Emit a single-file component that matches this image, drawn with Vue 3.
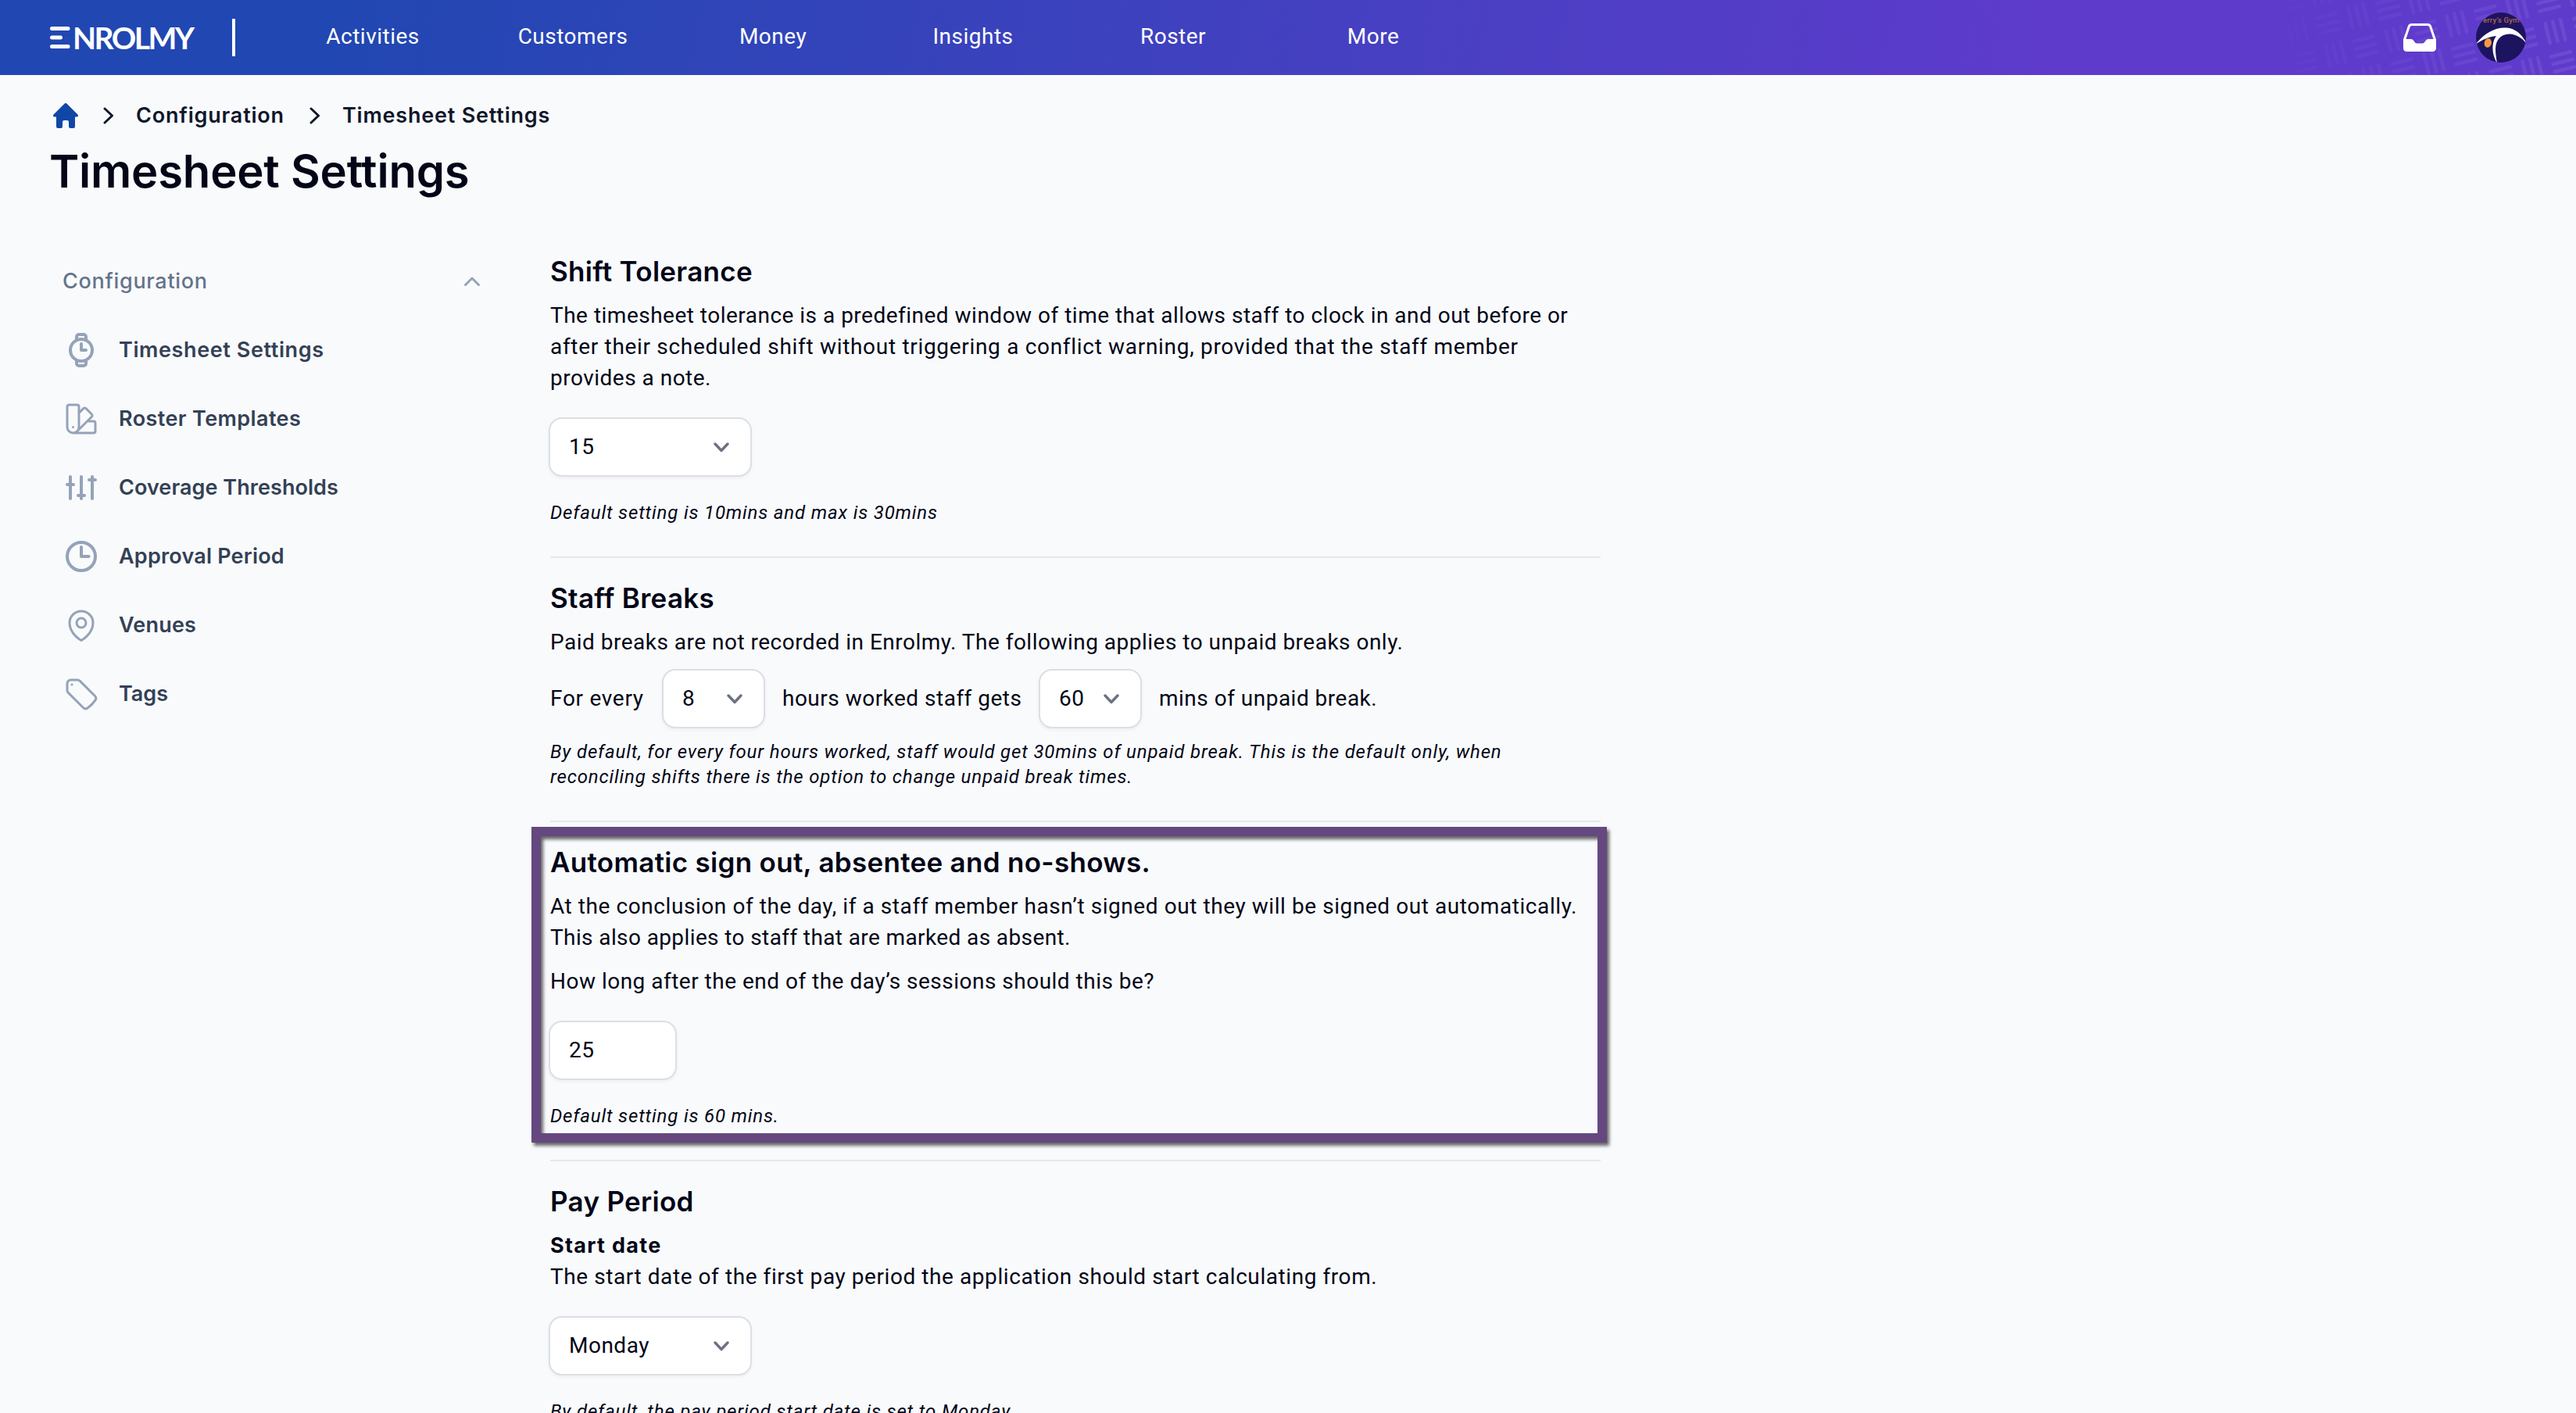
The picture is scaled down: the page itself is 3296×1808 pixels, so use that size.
<script setup>
import { ref } from 'vue'

const nav = ['Activities', 'Customers', 'Money', 'Insights', 'Roster', 'More']
const crumbs = ['Configuration', 'Timesheet Settings']

const links = [
  {
    label: 'Timesheet Settings',
    spacing: 0.6,
    stroke: 2,
    paths: [
      'M5 12a7 7 0 1 0 14 0a7 7 0 1 0-14 0z',
      'M12 8v4h3',
      'M9 5.4V3.5A1.5 1.5 0 0 1 10.5 2h3A1.5 1.5 0 0 1 15 3.5v1.9',
      'M9 18.6v1.9a1.5 1.5 0 0 0 1.5 1.5h3a1.5 1.5 0 0 0 1.5-1.5v-1.9',
    ],
  },
  {
    label: 'Roster Templates',
    spacing: 0.4,
    stroke: 1.5,
    paths: [
      'M4.098 19.902a3.75 3.75 0 0 0 5.304 0l6.401-6.402M6.75 21A3.75 3.75 0 0 1 3 17.25V4.125C3 3.504 3.504 3 4.125 3h5.25c.621 0 1.125.504 1.125 1.125v4.072M6.75 21a3.75 3.75 0 0 0 3.75-3.75V8.197M6.75 21h13.125c.621 0 1.125-.504 1.125-1.125v-5.25c0-.621-.504-1.125-1.125-1.125h-4.072M10.5 8.197l2.88-2.88c.438-.439 1.15-.439 1.59 0l3.712 3.713c.44.44.44 1.152 0 1.59l-2.879 2.88M6.75 17.25h.008v.008H6.75v-.008z',
    ],
  },
  {
    label: 'Coverage Thresholds',
    spacing: 0.06,
    stroke: 2,
    paths: ['M5 5v14M12 5v14M19 5v14M3 10h4M10 17h4M17 7h4'],
  },
  {
    label: 'Approval Period',
    spacing: 0.2,
    stroke: 2,
    paths: ['M3 12a9 9 0 1 0 18 0a9 9 0 1 0-18 0z', 'M12 6v6h4.8'],
  },
  {
    label: 'Venues',
    spacing: 0.2,
    stroke: 1.5,
    paths: [
      'M15 10.5a3 3 0 1 1-6 0 3 3 0 0 1 6 0z',
      'M19.5 10.5c0 7.142-7.5 11.25-7.5 11.25S4.5 17.642 4.5 10.5a7.5 7.5 0 1 1 15 0z',
    ],
  },
  {
    label: 'Tags',
    spacing: 0,
    stroke: 1.5,
    paths: [
      'M9.568 3H5.25A2.25 2.25 0 0 0 3 5.25v4.318c0 .597.237 1.17.659 1.591l9.581 9.581c.699.699 1.78.872 2.607.33a18.095 18.095 0 0 0 5.223-5.223c.542-.827.369-1.908-.33-2.607L11.16 3.66A2.25 2.25 0 0 0 9.568 3z',
      'M6 6h.008v.008H6V6z',
    ],
  },
]

const tolerance = ref('15')
const breakEvery = ref('8')
const breakMins = ref('60')
const signOutAfter = ref('25')
const startDay = ref('Monday')
</script>

<template>
  <div class="page">
    <header class="topbar">
      <svg class="topbar-pattern" width="480" height="96" viewBox="0 0 480 96">
        <defs>
          <pattern id="weave" width="80" height="80" patternUnits="userSpaceOnUse" patternTransform="translate(12 6) rotate(-14)">
            <path
              d="M7 10h26M7 20h26M7 30h26M50 7v26M60 7v26M70 7v26M10 47v26M20 47v26M30 47v26M47 50h26M47 60h26M47 70h26"
              stroke="#fff" stroke-width="4.5" stroke-linecap="round"
            />
          </pattern>
          <linearGradient id="fade" x1="0" x2="1" y1="0" y2="0">
            <stop offset="0.15" stop-color="#fff" stop-opacity="0" />
            <stop offset="0.5" stop-color="#fff" stop-opacity="0.04" />
            <stop offset="1" stop-color="#fff" stop-opacity="0.09" />
          </linearGradient>
          <mask id="fade-mask"><rect width="480" height="96" fill="url(#fade)" /></mask>
        </defs>
        <rect width="480" height="96" fill="url(#weave)" mask="url(#fade-mask)" />
      </svg>

      <div class="logo">
        <svg width="26" height="28" viewBox="0 0 26 28" stroke="#fff" stroke-width="5" stroke-linecap="round">
          <path d="M2.5 2.5h20.5M2.5 14h11M2.5 25.5h20.5" />
        </svg>
        <span>NROLMY</span>
      </div>
      <i class="divider"></i>
      <nav class="nav">
        <a v-for="n in nav" :key="n">{{ n }}</a>
      </nav>
      <div class="actions">
        <svg class="inbox" width="42" height="36" viewBox="0 0 42 36">
          <path d="M11 1.5h20a4 4 0 0 1 3.9 3L40.5 21v10.5a3 3 0 0 1-3 3h-33a3 3 0 0 1-3-3V21L7.1 4.5a4 4 0 0 1 3.9-3z" fill="none" stroke="#fff" stroke-width="3" />
          <path d="M0 20h9.5c4.5 0 4.5 5.5 8 5.5h7c3.5 0 3.5-5.5 8-5.5H42v11a5 5 0 0 1-5 5H5a5 5 0 0 1-5-5z" fill="#fff" />
        </svg>
        <svg class="avatar" width="64" height="64" viewBox="0 0 64 64">
          <defs><clipPath id="round"><circle cx="32" cy="32" r="32" /></clipPath></defs>
          <g clip-path="url(#round)">
            <rect width="64" height="64" fill="#1d145f" />
            <text x="9" y="12.5" class="avatar-text">erry’s Gym</text>
            <path d="M-1 41C11 26 25 18.5 39 19.5C51 20.5 59 28 65 40C58 32 52 28 43 27.5C31 27.5 25 36 25 47C25 53 26 58 27 65C23 58 21 51 21.5 43C22 37 23.5 33.5 26 30C16 31 8 35 -1 41z" fill="#fff" />
            <ellipse cx="15.3" cy="39" rx="4.6" ry="5.8" fill="#f39a3c" transform="rotate(14 15.3 39)" />
          </g>
        </svg>
      </div>
    </header>

    <div class="crumbs">
      <svg width="32" height="32" viewBox="0 0 32 32" fill="#0f47a6">
        <path d="M14.4.8a2.2 2.2 0 0 1 3.2 0l13.8 13.8c1.2 1.2.4 2.9-1 2.9H28V30a2 2 0 0 1-2 2h-4a2 2 0 0 1-2-2v-6a2 2 0 0 0-2-2h-4a2 2 0 0 0-2 2v6a2 2 0 0 1-2 2H6a2 2 0 0 1-2-2V17.5H1.6c-1.4 0-2.2-1.7-1-2.9z" />
      </svg>
      <template v-for="c in crumbs" :key="c">
        <svg class="crumb-sep" width="14" height="22" viewBox="0 0 14 22">
          <path d="M2 2l9.5 9L2 20" />
        </svg>
        <span>{{ c }}</span>
      </template>
    </div>
    <h1>Timesheet Settings</h1>

    <div class="body">
      <aside class="sidebar">
        <div class="group">
          <span>Configuration</span>
          <svg width="20" height="12" viewBox="0 0 20 12"><path d="M1.5 10.5l8.5-8.5 8.5 8.5" /></svg>
        </div>
        <a v-for="l in links" :key="l.label" class="link">
          <svg width="48" height="48" viewBox="0 0 24 24" :stroke-width="l.stroke">
            <path v-for="p in l.paths" :key="p" :d="p" />
          </svg>
          <span :style="{ letterSpacing: l.spacing + 'px' }">{{ l.label }}</span>
        </a>
      </aside>

      <main class="settings">
        <section>
          <h2>Shift Tolerance</h2>
          <p>
            The timesheet tolerance is a predefined window of time that allows staff to clock in and out before or<br>
            <span class="loose">after their scheduled shift without triggering a conflict warning, provided that the staff member</span><br>
            provides a note.
          </p>
          <div class="field wide spaced">
            <span>{{ tolerance }}</span>
            <svg class="caret" width="20" height="13" viewBox="0 0 20 13"><path d="M2 2l8 8.5L18 2" /></svg>
          </div>
          <p class="hint after-field">Default setting is 10mins and max is 30mins</p>
        </section>

        <section>
          <h2>Staff Breaks</h2>
          <p>Paid breaks are not recorded in Enrolmy. The following applies to unpaid breaks only.</p>
          <div class="inline">
            <span class="w-every">For every</span>
            <div class="field narrow">
              <span>{{ breakEvery }}</span>
              <svg class="caret" width="20" height="13" viewBox="0 0 20 13"><path d="M2 2l8 8.5L18 2" /></svg>
            </div>
            <span class="w-hours">hours worked staff gets</span>
            <div class="field narrow">
              <span>{{ breakMins }}</span>
              <svg class="caret" width="20" height="13" viewBox="0 0 20 13"><path d="M2 2l8 8.5L18 2" /></svg>
            </div>
            <span>mins of unpaid break.</span>
          </div>
          <p class="hint after-inline">
            By default, for every four hours worked, staff would get 30mins of unpaid break. This is the default only, when<br>
            reconciling shifts there is the option to change unpaid break times.
          </p>
        </section>

        <section>
          <h2>Automatic sign out, absentee and no-shows.</h2>
          <p>
            <span class="relaxed">At the conclusion of the day, if a staff member hasn’t signed out they will be signed out automatically.</span><br>
            <span class="snug">This also applies to staff that are marked as absent.</span>
          </p>
          <p>How long after the end of the day’s sessions should this be?</p>
          <div class="field minutes spaced">
            <span>{{ signOutAfter }}</span>
          </div>
          <p class="hint after-field">Default setting is 60 mins.</p>
          <i class="frame"></i>
        </section>

        <section>
          <h2>Pay Period</h2>
          <p class="relaxed">
            <b>Start date</b><br>
            The start date of the first pay period the application should start calculating from.
          </p>
          <div class="field wide spaced">
            <span>{{ startDay }}</span>
            <svg class="caret" width="20" height="13" viewBox="0 0 20 13"><path d="M2 2l8 8.5L18 2" /></svg>
          </div>
          <p class="hint after-field">By default, the pay period start date is set to Monday.</p>
        </section>
      </main>
    </div>
  </div>
</template>

<style>
html, body { margin: 0; overflow: hidden; background: #f9fafc; }
</style>

<style scoped>
.page { height: 1808px; overflow: hidden; background: #f9fafc; color: #020617; font: 400 28px/40px Roboto, sans-serif; letter-spacing: .49px; }

.topbar { position: relative; display: flex; align-items: center; height: 96px; padding: 0 64px; box-sizing: border-box; color: #fff; background: linear-gradient(100deg, #2147b2 0%, #2147b2 13%, #5f3bcc 80%, #5f3bcc 100%); }
.topbar-pattern { position: absolute; right: 0; top: 0; }
.logo { display: flex; align-items: center; width: 233px; gap: 3px; }
.logo span { font: 700 39px/40px Lato, sans-serif; letter-spacing: -2.5px; }
.divider { width: 4px; height: 48px; background: #fff; }
.nav { display: flex; margin-left: 48px; padding-bottom: 2px; }
.nav a { width: 256px; text-align: center; }
.actions { position: relative; display: flex; align-items: center; gap: 51px; margin-left: auto; }
.inbox { display: block; }
.avatar { display: block; }
.avatar-text { font: 500 9.5px Roboto, sans-serif; letter-spacing: .2px; fill: #b0664f; }

.crumbs { display: flex; align-items: center; height: 40px; margin-top: 32px; padding-left: 68px; color: #0f172a; font-family: Inter, sans-serif; font-size: 27px; font-weight: 600; letter-spacing: .8px; }
.crumbs svg { display: block; }
.crumbs .crumb-sep { margin: 0 28px 0 32px; fill: none; stroke: #0f172a; stroke-width: 3; stroke-linecap: round; stroke-linejoin: round; }
.crumbs span { margin-top: -1px; }
h1 { margin: 18px 0 0 63px; padding-top: 1px; font-family: Inter, sans-serif; font-size: 58px; line-height: 64px; font-weight: 600; letter-spacing: -.2px; }

.body { display: flex; align-items: flex-start; margin-top: 77px; }
.sidebar { width: 640px; padding-left: 80px; padding-top: 12px; box-sizing: border-box; font-family: Inter, sans-serif; font-size: 27px; font-weight: 600; flex-shrink: 0; }
.group { display: flex; align-items: center; justify-content: space-between; width: 534px; height: 40px; color: #64748b; font-weight: 500; letter-spacing: .7px; }
.group svg { fill: none; stroke: #94a3b8; stroke-width: 3; stroke-linecap: round; stroke-linejoin: round; }
.link { display: flex; align-items: center; gap: 24px; height: 88px; color: #334155; }
.link span { margin-top: -1px; }
.group + .link { margin-top: 24px; }
.link svg { fill: none; stroke: #94a3b8; stroke-linecap: round; stroke-linejoin: round; }

.settings { width: 1344px; margin-left: 64px; }
section { position: relative; padding-bottom: 40px; border-bottom: 2px solid #e2e8f0; }
section + section { padding-top: 32px; }
h2 { margin: -1px 0 17px; font-family: Inter, sans-serif; font-size: 35px; line-height: 40px; font-weight: 600; letter-spacing: .3px; }
p { margin: 0; white-space: nowrap; }
p + p:not(.hint) { margin-top: 16px; }
p b { font-family: Inter, sans-serif; font-weight: 700; font-size: 27px; letter-spacing: 1.3px; line-height: 1; }
.loose { letter-spacing: .69px; }
.relaxed { letter-spacing: .57px; }
.snug { letter-spacing: .39px; }
.hint { font-size: 24px; line-height: 32px; font-style: italic; letter-spacing: .84px; }
.after-field { margin-top: 30px; }
.after-inline { margin-top: 14px; }

.field { display: flex; align-items: center; justify-content: space-between; height: 76px; box-sizing: border-box; margin-left: -2px; padding: 0 27px 0 24px; background: #fff; border: 2px solid #dcdfe4; border-radius: 17px; box-shadow: 0 2px 4px rgba(0, 0, 0, .05); flex-shrink: 0; }
.field.wide { width: 260px; }
.field.narrow { width: 132px; margin-left: 0; }
.field.minutes { width: 164px; }
.spaced { margin-top: 30px; }
.caret { fill: none; stroke: #6b7280; stroke-width: 3.4; stroke-linecap: round; stroke-linejoin: round; }
.inline { display: flex; align-items: center; gap: 22px; height: 76px; margin-top: 14px; white-space: nowrap; }
.w-every { width: 121px; letter-spacing: .7px; }
.w-hours { width: 306px; }

/* callout drawn over the section, slightly wider than its column */
.frame { position: absolute; left: -24px; top: 6px; width: 1376px; height: 404px; box-sizing: border-box; border: 12px solid #64487f; filter: drop-shadow(3px 4px 2px rgba(0, 0, 0, .6)); pointer-events: none; }
</style>
